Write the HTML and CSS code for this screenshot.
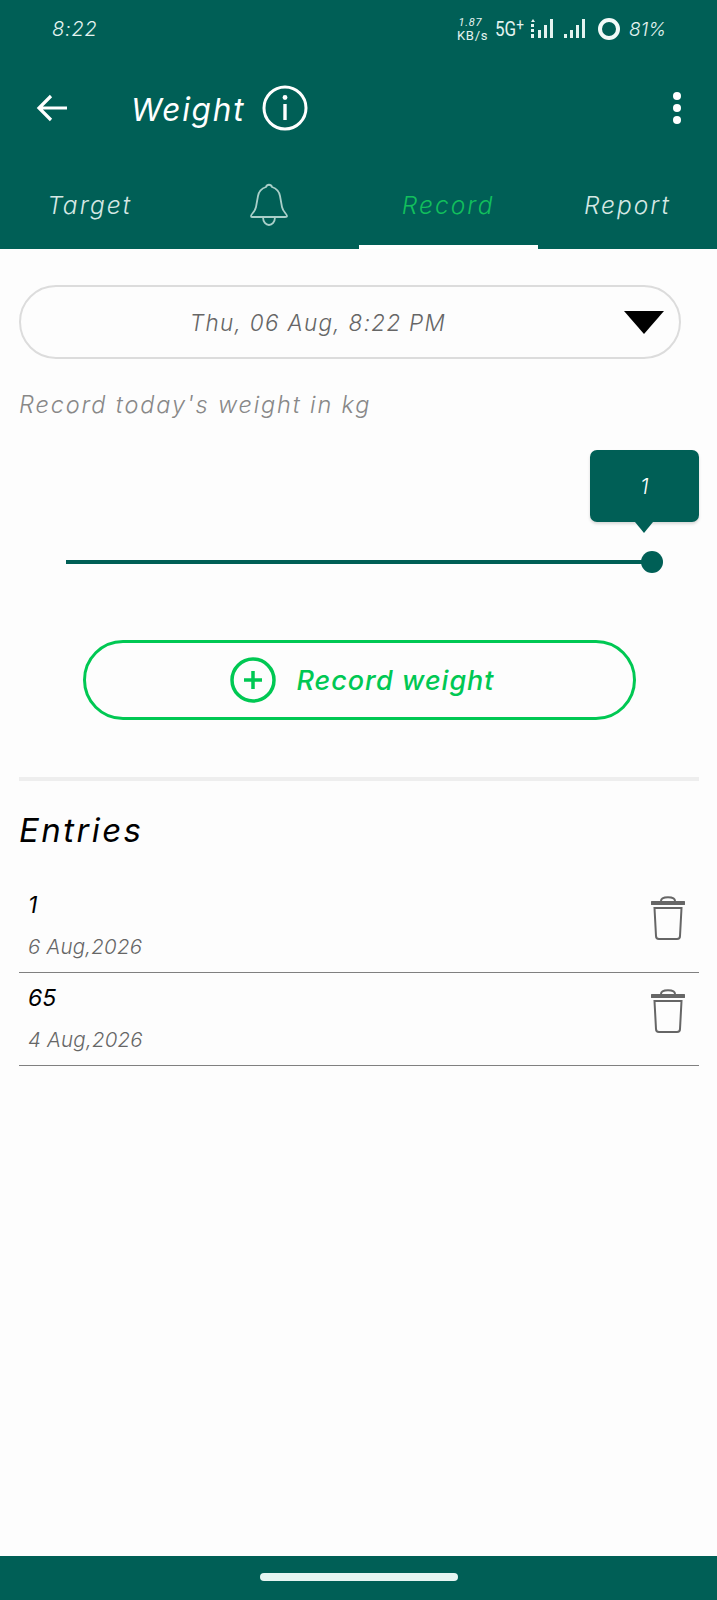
FILE: index.html
```html
<!DOCTYPE html>
<html lang="en">
<head>
    <meta charset="UTF-8">
    <meta name="viewport" content="width=device-width, initial-scale=1.0">
    <title>Weight</title>
    <link rel="stylesheet" href="styles.css">
</head>
<body>
<div class="app">
    <header class="header">
        <div class="status">
            <span class="status-time">8:22</span>
            <div class="status-right">
                <span class="speed"><span>1.87</span><span>KB/s</span></span>
                <span class="net">5G<sup>+</sup></span>
                <svg class="signal" width="24" height="22" viewBox="0 0 24 22" fill="#e4f3f0">
                    <path d="M3 1l2 3H1z"/>
                    <rect x="1" y="6" width="3" height="3"/>
                    <rect x="1" y="11" width="3" height="3"/>
                    <rect x="1" y="16" width="3" height="4"/>
                    <rect x="8" y="12" width="3" height="8"/>
                    <rect x="14" y="7" width="3" height="13"/>
                    <rect x="20" y="1" width="3" height="19"/>
                </svg>
                <svg class="signal" width="22" height="22" viewBox="0 0 22 22" fill="#e4f3f0">
                    <rect x="0" y="16" width="3" height="4"/>
                    <rect x="6" y="12" width="3" height="8"/>
                    <rect x="12" y="7" width="3" height="13"/>
                    <rect x="18" y="1" width="3" height="19"/>
                </svg>
                <svg class="battery" width="24" height="24" viewBox="0 0 24 24" fill="none">
                    <circle cx="12" cy="12" r="9" stroke="#f2faf8" stroke-width="4"/>
                </svg>
                <span class="status-batt">81%</span>
            </div>
        </div>
        <div class="toolbar">
            <svg class="back" width="32" height="28" viewBox="0 0 32 28" fill="none" stroke="#fff" stroke-width="3.2">
                <path d="M31 14H3M15 2L3 14l12 12"/>
            </svg>
            <h1 class="title">Weight</h1>
            <svg class="info" width="46" height="46" viewBox="0 0 46 46" fill="none" stroke="#fff">
                <circle cx="23" cy="23" r="21" stroke-width="3"/>
                <path d="M23 19v16" stroke-width="3.4"/>
                <circle cx="23" cy="12.5" r="2.4" fill="#fff" stroke="none"/>
            </svg>
            <div class="more"><i></i><i></i><i></i></div>
        </div>
        <nav class="tabs">
            <div class="tab">Target</div>
            <div class="tab">
                <svg width="40" height="44" viewBox="0 0 40 44" fill="none" stroke="#a9cfc9" stroke-width="1.8">
                    <path d="M2 33c0-2 4-4 5-9l2-11c1-6 5-8 8-9 1-3 5-3 6 0 3 1 7 3 8 9l2 11c1 5 5 7 5 9 0 1-1 1-2 1H3c-1 0-1 0-1-1z"/>
                    <path d="M14 34c0 5 3 8 6 8s6-3 6-8"/>
                </svg>
            </div>
            <div class="tab tab-active">Record</div>
            <div class="tab">Report</div>
        </nav>
    </header>

    <main class="content">
        <div class="dropdown">
            <span class="dropdown-text">Thu, 06 Aug, 8:22 PM</span>
            <span class="dropdown-arrow"></span>
        </div>
        <p class="hint">Record today's weight in kg</p>

        <div class="slider">
            <div class="bubble">1</div>
            <div class="track"><span class="thumb"></span></div>
        </div>

        <button class="record-btn">
            <svg width="46" height="46" viewBox="0 0 46 46" fill="none" stroke="#00c853">
                <circle cx="23" cy="23" r="21" stroke-width="3.5"/>
                <path d="M23 14v18M14 23h18" stroke-width="3.5"/>
            </svg>
            <span>Record weight</span>
        </button>

        <hr class="divider">

        <h2 class="entries-title">Entries</h2>

        <div class="entry">
            <div class="entry-info">
                <div class="entry-value">1</div>
                <div class="entry-date">6 Aug,2026</div>
            </div>
            <svg class="trash" width="34" height="44" viewBox="0 0 34 44" fill="none" stroke="#666">
                <path d="M1 7h32" stroke-width="4" stroke-linecap="round"/>
                <path d="M10 5c0-5 14-5 14 0" stroke-width="2"/>
                <path d="M3.5 12l1.500 28c0 2 1 3 3 3h18c2 0 3-1 3-3l1.500-28z" stroke-width="2"/>
            </svg>
        </div>
        <div class="entry">
            <div class="entry-info">
                <div class="entry-value">65</div>
                <div class="entry-date">4 Aug,2026</div>
            </div>
            <svg class="trash" width="34" height="44" viewBox="0 0 34 44" fill="none" stroke="#666">
                <path d="M1 7h32" stroke-width="4" stroke-linecap="round"/>
                <path d="M10 5c0-5 14-5 14 0" stroke-width="2"/>
                <path d="M3.5 12l1.500 28c0 2 1 3 3 3h18c2 0 3-1 3-3l1.500-28z" stroke-width="2"/>
            </svg>
        </div>
    </main>

    <footer class="navbar"><span class="handle"></span></footer>
</div>
</body>
</html>
```

FILE: styles.css
```css
* { box-sizing: border-box; }
html, body { margin: 0; padding: 0; }
body { font-family: "Inter", "Open Sans", sans-serif; font-style: italic; background-color: #fdfdfd; }

.app { width: 717px; height: 1600px; display: flex; flex-direction: column; overflow: hidden; }

.header { height: 249px; background-color: #005f56; color: #fff; flex: none; }

.status { height: 60px; padding: 0 51px 2px 52px; display: flex; align-items: center; justify-content: space-between; color: #e4f3f0; }
.status-time { font-size: 20px; font-weight: 300; letter-spacing: 0.8px; }
.status-right { display: flex; align-items: center; }
.speed { display: flex; flex-direction: column; align-items: flex-end; font-family: Roboto, sans-serif; font-style: normal; font-size: 13px; line-height: 13px; letter-spacing: 0.7px; }
.speed span:first-child { font-size: 11px; margin-right: 6px; font-style: italic; }
.net { font-family: Roboto, sans-serif; font-style: normal; font-size: 20px; margin-left: 7px; transform: scaleX(0.85); transform-origin: left; width: 31px; }
.net sup { font-size: 16px; line-height: 0; vertical-align: 6px; }
.signal { margin-left: 4px; }
.signal + .signal { margin-left: 10px; }
.battery { margin-left: 11px; }
.status-batt { font-size: 19px; font-weight: 300; margin-left: 8px; }

.toolbar { height: 96px; display: flex; align-items: center; padding: 0 36px; }
.title { margin: 0 0 0 63px; padding-top: 3px; font-size: 31.500px; font-weight: 400; font-style: italic; letter-spacing: 1.800px; line-height: 40px; }
.info { margin-left: 17px; }
.more { margin-left: auto; display: flex; flex-direction: column; gap: 4px; }
.more i { display: block; width: 8px; height: 8px; border-radius: 50%; background-color: #fff; }

.tabs { height: 93px; display: grid; grid-template-columns: repeat(4, 1fr); }
.tab { display: flex; align-items: center; justify-content: center; padding-top: 8px; font-size: 24.500px; font-weight: 300; letter-spacing: 2px; color: #d5e8e4; border-bottom: 4px solid transparent; }
.tab-active { color: #12bf5c; border-bottom-color: #fff; }

.content { flex: 1; padding: 36px 18px 0 19px; }

.dropdown { height: 74px; margin-right: 18px; border: 2px solid #dcdcdc; border-radius: 37px; display: flex; align-items: center; justify-content: center; position: relative; }
.dropdown-text { font-size: 22.500px; font-weight: 300; color: #666; letter-spacing: 1.300px; margin-right: 64px; }
.dropdown-arrow { position: absolute; right: 15px; top: 24px; width: 0; height: 0; border-left: 20px solid transparent; border-right: 20px solid transparent; border-top: 23px solid #000; }

.hint { margin: 32px 0 0; font-size: 23.500px; line-height: 28px; font-weight: 300; color: #888; letter-spacing: 1.850px; }

.slider { position: relative; height: 225px; padding-top: 141px; }
.bubble { position: absolute; right: 0; top: 31px; width: 109px; height: 72px; display: flex; align-items: center; justify-content: center; background-color: #005f56; color: #fff; font-size: 21px; font-weight: 300; border-radius: 7px; box-shadow: 0 2px 3px rgba(0, 0, 0, 0.15); }
.bubble::after { content: ""; position: absolute; left: 45px; bottom: -11px; border-left: 9px solid transparent; border-right: 9px solid transparent; border-top: 11px solid #005f56; }
.track { position: relative; height: 4px; margin-left: 47px; width: 586px; background-color: #005f56; }
.thumb { position: absolute; right: -11px; top: -9px; width: 22px; height: 22px; border-radius: 50%; background-color: #005f56; }

.record-btn { display: flex; align-items: center; justify-content: center; width: 553px; height: 80px; margin: -4px 0 0 64px; border: 3px solid #00c853; border-radius: 40px; background: none; padding: 0 0 0 6px; color: #00c853; font-family: inherit; font-style: italic; font-size: 27px; font-weight: 500; letter-spacing: 1px; }
.record-btn span { margin-left: 20px; }

.divider { margin: 57px 0 0; height: 4px; border: 0; background-color: #eeeeee; }

.entries-title { margin: 29px 0 0; font-size: 33px; line-height: 40px; font-weight: 400; font-style: italic; color: #000; letter-spacing: 2.400px; }

.entry { height: 93px; display: flex; justify-content: space-between; border-bottom: 1px solid #808080; padding: 0 14px 0 9px; }
.entries-title + .entry { margin-top: 30px; }
.entry-value { font-size: 23px; line-height: 30px; color: #000; margin-top: 10px; }
.entry-date { font-size: 20.500px; line-height: 26px; font-weight: 300; color: #666; margin-top: 14px; letter-spacing: 0.2px; }
.trash { margin-top: 16px; }

.navbar { height: 44px; flex: none; background-color: #005f56; display: flex; justify-content: center; padding-top: 17px; }
.handle { width: 198px; height: 8px; border-radius: 4px; background-color: #e6f5f2; }
```
